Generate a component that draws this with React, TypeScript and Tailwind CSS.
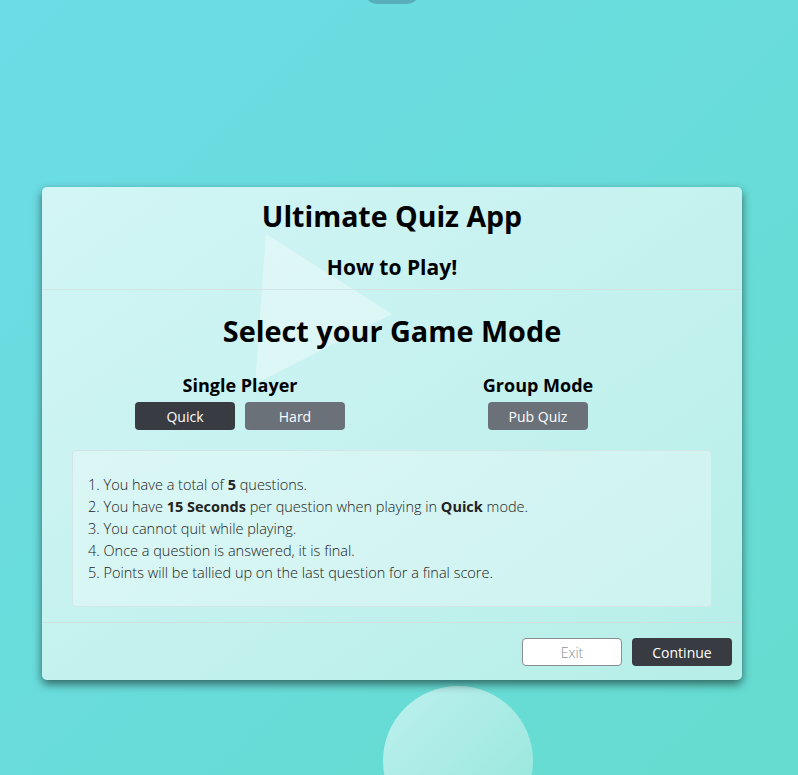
import React from "react";

const rules = [
  <>You have a total of <b className="font-bold">5</b> questions.</>,
  <>You have <b className="font-bold">15 Seconds</b> per question when playing in <b className="font-bold">Quick</b> mode.</>,
  <>You cannot quit while playing.</>,
  <>Once a question is answered, it is final.</>,
  <>Points will be tallied up on the last question for a final score.</>,
];

const ModeButton = ({ label, active }: { label: string; active?: boolean }) => (
  <button
    className={
      active
        ? "w-[100px] h-[28px] rounded-[4px] bg-[#383b41] text-white text-[14px]"
        : "w-[100px] h-[28px] rounded-[4px] bg-[#6b7179] text-white text-[14px]"
    }
  >
    {label}
  </button>
);

const App = () => {
  return (
    <div className="relative w-[798px] h-[775px] overflow-hidden bg-gradient-to-br from-[#6cdce6] to-[#65dccf] font-['Open_Sans',sans-serif] text-black">
      {/* decorative shapes */}
      <div className="absolute left-[363px] top-[-26px] w-[58px] h-[30px] rounded-full bg-[#58aebb]" />
      <div className="absolute left-[383px] top-[686px] w-[150px] h-[150px] rounded-full bg-gradient-to-br from-[#bdf0ee] to-[#93e6dc]" />

      <div className="pt-[187px] pl-[42px]">
        <div className="relative w-[700px] h-[493px] rounded-[5px] bg-gradient-to-br from-[#d3f5f6] to-[#b6eee8] shadow-[0_4px_10px_rgba(0,0,0,0.55)] overflow-hidden">
          <svg className="absolute left-0 top-0" width="700" height="493">
            <polygon points="224,47 350,127 213,197" fill="#ffffff" fillOpacity="0.35" />
          </svg>

          <div className="relative flex flex-col items-center">
            <h1 className="mt-[10px] text-[28.5px] font-bold leading-[38px]">Ultimate Quiz App</h1>
            <h2 className="mt-[18px] text-[21px] font-bold leading-[28px]">How to Play!</h2>
            <div className="mt-[8px] w-full h-px bg-[#d3e3e3]" />

            <h2 className="mt-[23px] text-[28.8px] font-bold leading-[36px]">Select your Game Mode</h2>

            <div className="mt-[25px] w-full flex">
              <div className="w-[396px] flex flex-col items-center">
                <h3 className="text-[18px] font-bold leading-[22px]">Single Player</h3>
                <div className="mt-[6px] flex gap-[10px]">
                  <ModeButton label="Quick" active />
                  <ModeButton label="Hard" />
                </div>
              </div>
              <div className="w-[200px] flex flex-col items-center">
                <h3 className="text-[18px] font-bold leading-[22px]">Group Mode</h3>
                <div className="mt-[6px] flex">
                  <ModeButton label="Pub Quiz" />
                </div>
              </div>
            </div>

            <div className="mt-[20px] w-[640px] h-[157px] rounded-[4px] border border-[#d3e6e6] bg-white/30 px-[15px] py-[23px]">
              <ol className="text-[14.5px] font-light leading-[22px] text-[#222]">
                {rules.map((r, i) => (
                  <li key={i}>
                    {i + 1}. {r}
                  </li>
                ))}
              </ol>
            </div>

            <div className="mt-[15px] w-full h-px bg-[#cfe0e0]" />

            <div className="w-full flex justify-end gap-[10px] pr-[10px] pt-[15px]">
              <button className="w-[100px] h-[28px] rounded-[4px] bg-white border border-[#8a8f95] text-[#8a8f95] text-[14px] font-light">
                Exit
              </button>
              <button className="w-[100px] h-[28px] rounded-[4px] bg-[#383b41] text-white text-[14px]">
                Continue
              </button>
            </div>
          </div>
        </div>
      </div>
    </div>
  );
};

export default App;
